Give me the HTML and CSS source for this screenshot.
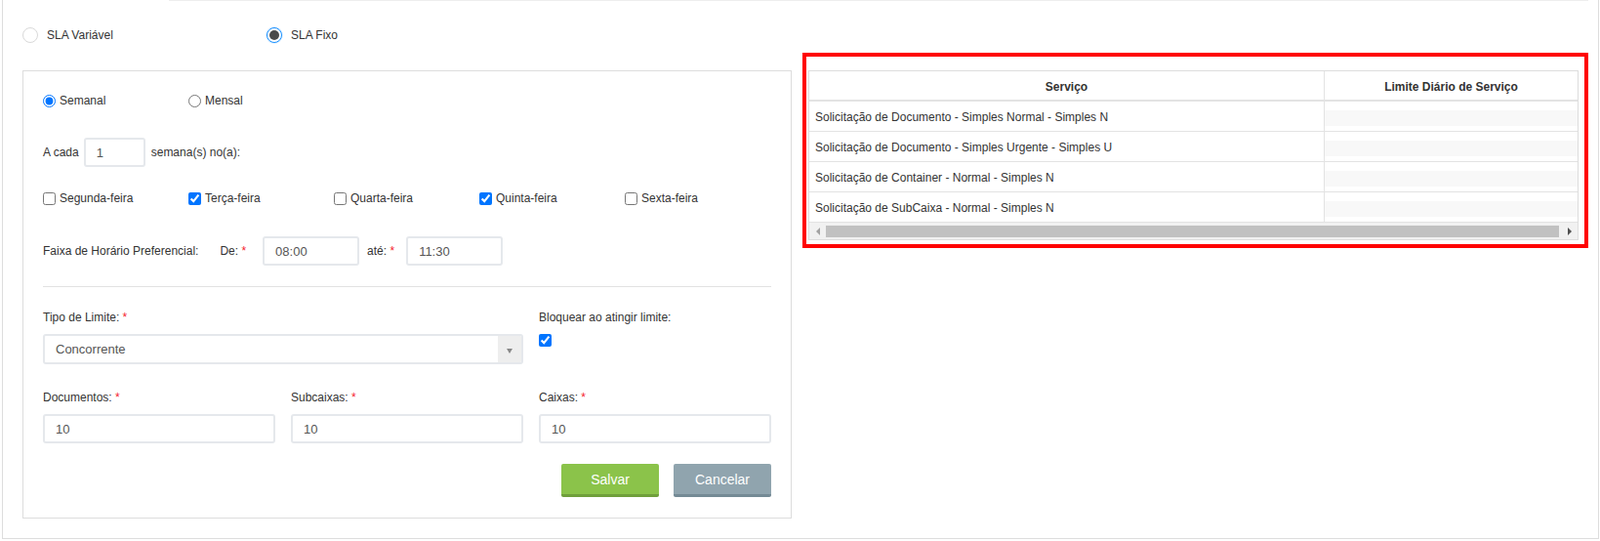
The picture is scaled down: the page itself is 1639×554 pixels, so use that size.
FILE: index.html
```html
<!DOCTYPE html>
<html lang="pt-BR">
<head>
<meta charset="utf-8">
<title>SLA</title>
<link rel="stylesheet" href="styles.css">
</head>
<body>
<div class="panel">
  <div class="topline"></div>
  <div class="cols">
    <div class="left">
      <div class="sla-row">
        <label class="sla-opt"><span class="ant-radio"></span>SLA Variável</label>
        <label class="sla-opt"><span class="ant-radio checked"></span>SLA Fixo</label>
      </div>
      <div class="form-box">
        <div class="row r1">
          <label class="opt"><input type="radio" name="per" checked>Semanal</label>
          <label class="opt"><input type="radio" name="per">Mensal</label>
        </div>
        <div class="row r2">
          <span>A cada</span>
          <input class="txt every" type="text" value="1">
          <span>semana(s) no(a):</span>
        </div>
        <div class="row r3">
          <label class="opt"><input type="checkbox">Segunda-feira</label>
          <label class="opt"><input type="checkbox" checked>Terça-feira</label>
          <label class="opt"><input type="checkbox">Quarta-feira</label>
          <label class="opt"><input type="checkbox" checked>Quinta-feira</label>
          <label class="opt"><input type="checkbox">Sexta-feira</label>
        </div>
        <div class="row r4">
          <span>Faixa de Horário Preferencial:</span>
          <span class="de">De: <span class="req">*</span></span>
          <input class="txt time t1" type="text" value="08:00">
          <span class="ate">até: <span class="req">*</span></span>
          <input class="txt time t2" type="text" value="11:30">
        </div>
        <div class="sep"></div>
        <div class="grid3">
          <div class="field span2">
            <div class="lbl">Tipo de Limite: <span class="req">*</span></div>
            <div class="select"><span class="sel-text">Concorrente</span><span class="sel-arrow"><span class="tri"></span></span></div>
          </div>
          <div class="field">
            <div class="lbl">Bloquear ao atingir limite:</div>
            <input class="blk" type="checkbox" checked>
          </div>
          <div class="field">
            <div class="lbl">Documentos: <span class="req">*</span></div>
            <input class="txt full" type="text" value="10">
          </div>
          <div class="field">
            <div class="lbl">Subcaixas: <span class="req">*</span></div>
            <input class="txt full" type="text" value="10">
          </div>
          <div class="field">
            <div class="lbl">Caixas: <span class="req">*</span></div>
            <input class="txt full" type="text" value="10">
          </div>
        </div>
        <div class="actions">
          <button class="btn save">Salvar</button>
          <button class="btn cancel">Cancelar</button>
        </div>
      </div>
    </div>
    <div class="right">
      <div class="highlight">
        <div class="tablewrap">
          <div class="trow thead">
            <div class="c1">Serviço</div>
            <div class="c2">Limite Diário de Serviço</div>
          </div>
          <div class="trow">
            <div class="c1">Solicitação de Documento - Simples Normal - Simples N</div>
            <div class="c2"><div class="band"></div></div>
          </div>
          <div class="trow">
            <div class="c1">Solicitação de Documento - Simples Urgente - Simples U</div>
            <div class="c2"><div class="band"></div></div>
          </div>
          <div class="trow">
            <div class="c1">Solicitação de Container - Normal - Simples N</div>
            <div class="c2"><div class="band"></div></div>
          </div>
          <div class="trow">
            <div class="c1">Solicitação de SubCaixa - Normal - Simples N</div>
            <div class="c2"><div class="band"></div></div>
          </div>
          <div class="hscroll">
            <div class="sb-btn"><span class="arr-l"></span></div>
            <div class="sb-track"><div class="sb-thumb"></div></div>
            <div class="sb-btn"><span class="arr-r"></span></div>
          </div>
        </div>
      </div>
    </div>
  </div>
</div>
</body>
</html>
```

FILE: styles.css
```css
* { box-sizing: border-box; }
html, body { margin: 0; padding: 0; background: #fff; }
body {
  font-family: "Liberation Sans", Arial, sans-serif;
  font-size: 12px;
  color: #333;
}
.panel {
  margin-left: 2px;
  width: 1636px;
  height: 552px;
  border: 1px solid #ddd;
  border-top: none;
  padding: 0 10px 20px 20px;
}
.topline {
  height: 1px;
  margin-left: 150px;
  background: #eee;
}
.cols {
  display: flex;
  gap: 11px;
}
.left { width: 788px; flex: none; }
.right { flex: 1; margin-top: 53px; }

.sla-row {
  display: flex;
  margin-top: 27px;
  height: 16px;
}
.sla-opt {
  width: 250px;
  display: flex;
  align-items: center;
  line-height: 16px;
}
.ant-radio {
  position: relative;
  width: 16px;
  height: 16px;
  border: 1px solid #d9d9d9;
  border-radius: 50%;
  margin-right: 9px;
  background: #fff;
}
.ant-radio.checked {
  border-color: #1890ff;
  box-shadow: 0 0 0 1px rgba(24,144,255,0.12);
}
.ant-radio.checked::after {
  content: "";
  position: absolute;
  left: 2px;
  top: 2px;
  width: 10px;
  height: 10px;
  border-radius: 50%;
  background: #4a4a4a;
}

.form-box {
  margin-top: 28px;
  border: 1px solid #ddd;
  padding: 0 20px 21px 20px;
}
.row { display: flex; align-items: center; }
.r1 { margin-top: 20px; height: 20px; }
.r2 { margin-top: 28px; height: 30px; }
.r3 { margin-top: 22px; height: 20px; }
.r4 { margin-top: 29px; height: 30px; }
.opt {
  width: 149px;
  display: flex;
  align-items: center;
  flex: none;
}
.opt input {
  margin: 0 4px 0 0;
  width: 13px;
  height: 13px;
}
.txt {
  height: 30px;
  border: 2px solid #e5e8ec;
  border-radius: 3px;
  padding: 0 11px;
  font-family: "Liberation Sans", Arial, sans-serif;
  font-size: 13px;
  color: #555;
  background: #fff;
  outline: none;
}
.every { width: 63px; margin: 0 6px 0 5px; }
.time { width: 99px; }
.de { margin-left: 22px; }
.t1 { margin-left: 17px; }
.ate { margin-left: 8px; }
.t2 { margin-left: 12px; }
.req { color: #f5222d; }

.sep {
  margin-top: 21px;
  height: 1px;
  background: #e2e2e2;
}
.grid3 {
  margin-top: 23px;
  display: grid;
  grid-template-columns: repeat(3, 1fr);
  column-gap: 16px;
  row-gap: 26px;
}
.span2 { grid-column: span 2; }
.lbl {
  line-height: 16px;
  height: 16px;
  margin-bottom: 9px;
}
.full { width: 100%; display: block; }
.select {
  height: 31px;
  display: flex;
  align-items: center;
  border: 2px solid #e5e8ec;
  border-radius: 3px;
  font-size: 13px;
  color: #555;
  overflow: hidden;
}
.sel-text { padding-left: 11px; flex: 1; }
.sel-arrow {
  width: 24px;
  align-self: stretch;
  background: #eee;
  display: flex;
  align-items: center;
  justify-content: center;
}
.tri {
  width: 0;
  height: 0;
  border-left: 3px solid transparent;
  border-right: 3px solid transparent;
  border-top: 5px solid #888;
  margin-top: 3px;
}
.blk { margin: 0; width: 13px; height: 13px; display: block; }

.actions {
  margin-top: 21px;
  display: flex;
  justify-content: flex-end;
  gap: 15px;
}
.btn {
  width: 100px;
  height: 34px;
  border: none;
  border-bottom: 3px solid;
  border-radius: 2px;
  color: #fff;
  font-family: "Liberation Sans", Arial, sans-serif;
  font-size: 14px;
  padding: 0;
}
.save { background: #8bc34a; border-bottom-color: #6f9f3b; }
.cancel { background: #90a4ae; border-bottom-color: #748a95; }

.highlight {
  border: 4px solid #ff0000;
  padding: 14px 6px 4px 2px;
}
.tablewrap {
  border: 1px solid #ddd;
  background: #fff;
}
.trow {
  display: grid;
  grid-template-columns: 528px 1fr;
  height: 31px;
  border-bottom: 1px solid #e3e3e3;
}
.trow .c1 {
  border-right: 1px solid #e3e3e3;
  padding: 1px 0 0 6px;
  line-height: 30px;
  white-space: nowrap;
  overflow: hidden;
}
.trow .c2 { position: relative; }
.band {
  margin-top: 9px;
  height: 16px;
  background: #f8f8f8;
}
.thead {
  border-bottom: 2px solid #e3e3e3;
  font-weight: bold;
}
.thead .c1, .thead .c2 {
  text-align: center;
  line-height: 29px;
  padding: 2px 0 0 0;
}
.hscroll {
  display: flex;
  height: 17px;
  background: #f1f1f1;
}
.sb-btn {
  width: 17px;
  flex: none;
  display: flex;
  align-items: center;
  justify-content: center;
}
.arr-l {
  width: 0; height: 0;
  border-top: 4px solid transparent;
  border-bottom: 4px solid transparent;
  border-right: 4px solid #a3a3a3;
}
.arr-r {
  width: 0; height: 0;
  border-top: 4px solid transparent;
  border-bottom: 4px solid transparent;
  border-left: 4px solid #505050;
}
.sb-track {
  flex: 1;
  padding: 3px 2px 2px 0;
}
.sb-thumb {
  height: 12px;
  width: 100%;
  background: #c1c1c1;
}
```
